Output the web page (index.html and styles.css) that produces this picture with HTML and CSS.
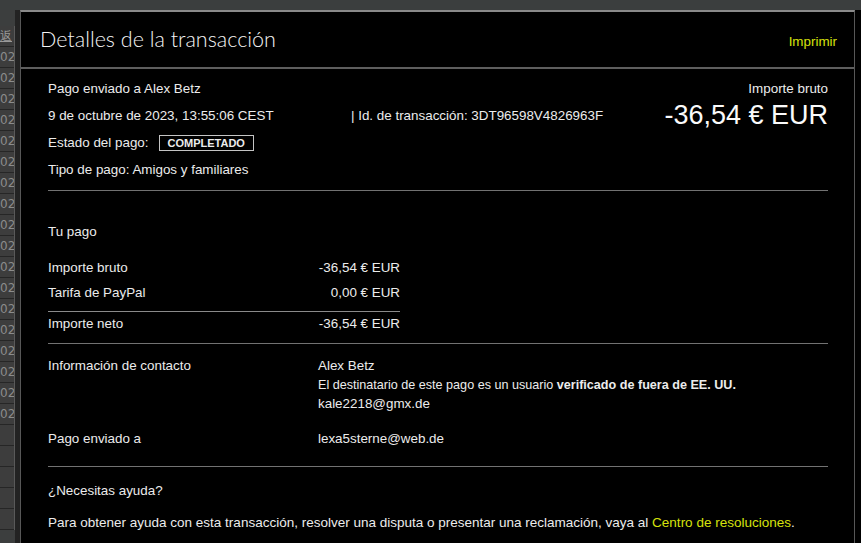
FILE: index.html
```html
<!DOCTYPE html>
<html lang="es">
  <head>
    <meta charset="UTF-8" />
    <title>Detalles de la transacción</title>
    <link rel="stylesheet" href="styles.css">
  </head>
  <body>
    <div class="sheet">
      <div class="sheet-head"></div>
      <div class="sheet-col">
        <div class="cell cell-head">返</div>
        <div class="cell">02</div>
        <div class="cell">02</div>
        <div class="cell">02</div>
        <div class="cell">02</div>
        <div class="cell">02</div>
        <div class="cell">02</div>
        <div class="cell">02</div>
        <div class="cell">02</div>
        <div class="cell">02</div>
        <div class="cell">02</div>
        <div class="cell">02</div>
        <div class="cell">02</div>
        <div class="cell">02</div>
        <div class="cell">02</div>
        <div class="cell">02</div>
        <div class="cell">02</div>
        <div class="cell">02</div>
        <div class="cell">02</div>
        <div class="cell"></div>
        <div class="cell"></div>
        <div class="cell"></div>
        <div class="cell"></div>
        <div class="cell"></div>
      </div>
    </div>

    <div class="dialog">
      <header class="dialog-head">
        <h1 class="dialog-title">Detalles de la transacción</h1>
        <a class="link" href="#">Imprimir</a>
      </header>

      <div class="dialog-body">
        <section class="summary">
          <div class="summary-info">
            <p>Pago enviado a Alex Betz</p>
            <p class="summary-date">
              <span class="date">9 de octubre de 2023, 13:55:06 CEST</span>
              <span>| Id. de transacción: 3DT96598V4826963F</span>
            </p>
            <p>Estado del pago: <span class="badge">COMPLETADO</span></p>
            <p>Tipo de pago: Amigos y familiares</p>
          </div>
          <div class="summary-amount">
            <div class="amount-label">Importe bruto</div>
            <div class="amount-value">-36,54 € EUR</div>
          </div>
        </section>

        <section class="payment">
          <h2 class="section-title">Tu pago</h2>
          <div class="breakdown">
            <div class="breakdown-row"><span>Importe bruto</span><span>-36,54 € EUR</span></div>
            <div class="breakdown-row"><span>Tarifa de PayPal</span><span>0,00 € EUR</span></div>
            <div class="breakdown-row total"><span>Importe neto</span><span>-36,54 € EUR</span></div>
          </div>
        </section>

        <section class="contact">
          <div class="contact-label">Información de contacto</div>
          <div class="contact-value">
            <div>Alex Betz</div>
            <div class="note">El destinatario de este pago es un usuario <b>verificado de fuera de EE. UU.</b></div>
            <div>kale2218@gmx.de</div>
          </div>
          <div class="contact-label">Pago enviado a</div>
          <div class="contact-value">lexa5sterne@web.de</div>
        </section>

        <section class="help">
          <h2 class="section-title">¿Necesitas ayuda?</h2>
          <p>Para obtener ayuda con esta transacción, resolver una disputa o presentar una reclamación, vaya al <a class="link" href="#">Centro de resoluciones</a>.</p>
        </section>
      </div>
    </div>
  </body>
</html>
```

FILE: styles.css
```css
* {
  margin: 0;
  padding: 0;
  box-sizing: border-box;
}

body {
  width: 861px;
  height: 543px;
  overflow: hidden;
  position: relative;
  background: #3c3e3e;
  font-family: "Liberation Sans", Arial, sans-serif;
  font-size: 13.4px;
  color: #ececec;
}

/* spreadsheet behind the dialog */
.sheet-head {
  height: 10px;
  background: #3b3e3e;
}

.sheet-col {
  width: 15px;
  margin-top: 16px;
  border-right: 1px solid #5a5a5a;
}

.cell {
  height: 21px;
  line-height: 21px;
  overflow: hidden;
  white-space: nowrap;
  font-family: "DejaVu Sans", sans-serif;
  font-size: 12px;
  color: #8c8c8c;
  background: #3d3d3d;
  border-bottom: 1px solid #262626;
}

.cell-head {
  color: #9a9a9a;
  text-decoration: underline;
}

/* dialog */
.dialog {
  position: absolute;
  left: 20px;
  top: 10px;
  right: 6px;
  bottom: -10px;
  background: #000;
  border: 1px solid #575757;
  border-top: 2px solid #8a8a8a;
  box-shadow: 6px 0 0 #000, -5px 0 0 #232323;
}

.dialog-head {
  display: flex;
  align-items: center;
  justify-content: space-between;
  height: 57px;
  padding: 0 17px 0 19px;
  border-bottom: 2px solid #5e5e5e;
}

.dialog-title {
  font-family: Lato, sans-serif;
  font-weight: 300;
  font-size: 21.5px;
  color: #f4f4f4;
  padding-bottom: 2px;
}

.link {
  color: #d6e20c;
  text-decoration: none;
}

.dialog-head .link {
  padding-top: 3px;
}

.dialog-body {
  padding: 0 26px 0 27px;
}

.dialog-body section {
  border-bottom: 1px solid #727272;
}

/* summary */
.summary {
  display: flex;
  justify-content: space-between;
  padding: 6px 0 7px;
}

.summary-info p {
  display: flex;
  align-items: center;
  height: 27px;
}

.summary-date .date {
  width: 303px;
}

.badge {
  margin-left: 10px;
  padding: 0 8px;
  height: 16px;
  line-height: 14px;
  border: 1px solid #c4c4c4;
  font-size: 11px;
  font-weight: bold;
}

.summary-amount {
  text-align: right;
}

.amount-label {
  line-height: 27px;
}

.amount-value {
  font-size: 27px;
  line-height: 27px;
  color: #fafafa;
}

/* tu pago */
.payment {
  padding: 31px 0 9px;
}

.section-title {
  font-size: 13.4px;
  font-weight: normal;
  line-height: 20px;
}

.breakdown {
  width: 352px;
  margin-top: 16px;
}

.breakdown-row {
  display: flex;
  justify-content: space-between;
  line-height: 20px;
  margin-bottom: 5px;
}

.breakdown-row.total {
  margin: 8px 0 0;
  padding-top: 2px;
  border-top: 1px solid #8a8a8a;
}

/* contacto */
.contact {
  display: grid;
  grid-template-columns: 270px 1fr;
  row-gap: 15px;
  padding: 12px 0 17px;
  line-height: 20px;
}

.contact .note {
  font-size: 12.6px;
  line-height: 18px;
}

/* ayuda */
.help {
  padding: 14px 0 20px;
  border-bottom: none !important;
}

.help p {
  margin-top: 12px;
  line-height: 20px;
  font-size: 13.5px;
}
```
